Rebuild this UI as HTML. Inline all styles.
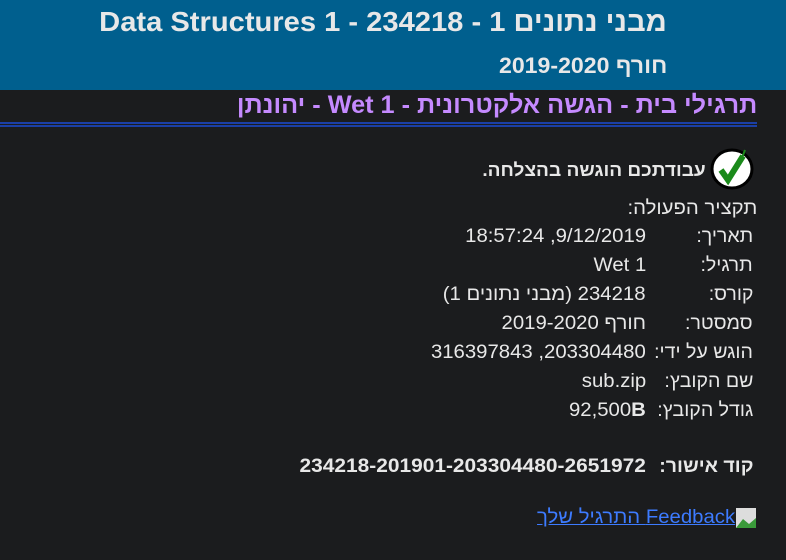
<!DOCTYPE html>
<html><head><meta charset="utf-8"><style>
body{margin:0;width:786px;height:560px;background:#1b1c1e;overflow:hidden;font-family:"Liberation Sans",Arial,sans-serif;color:#e8e8e8;position:relative}
.hdr{position:absolute;left:0;top:0;width:786px;height:90px;background:#005f8e}
.a{position:absolute;white-space:nowrap;direction:rtl;transform-origin:right center}
.r{font-size:19px;line-height:20px;transform:scaleX(1.07)}
.l{right:33px;transform:scaleX(1.03)}.v{right:140px}
</style></head><body>
<div class="hdr"></div>
<div class="a" style="right:119px;top:5px;font-size:28px;font-weight:bold;color:#e8e8e8;line-height:34px;transform:scaleX(1.04)">מבני נתונים 1 - Data Structures 1 - 234218</div>
<div class="a" style="right:119px;top:53px;font-size:22px;font-weight:bold;color:#e8e8e8;line-height:26px;transform:scaleX(1.05)">חורף 2019-2020</div>
<div class="a" style="right:29px;top:91px;font-size:25px;font-weight:bold;color:#c58aff;line-height:28px;transform:scaleX(1.01)">תרגילי בית - הגשה אלקטרונית - Wet 1 - יהונתן</div>
<div style="position:absolute;left:0;top:122px;width:757px;height:2px;background:#1b3fa6"></div>
<div style="position:absolute;left:0;top:125px;width:757px;height:2px;background:#1b3fa6"></div>
<svg style="position:absolute;left:709px;top:144px" width="46" height="46" viewBox="0 0 46 46"><ellipse cx="23" cy="25" rx="20" ry="19" fill="#fff" stroke="#000" stroke-width="3"/><path d="M12 26 L19 36 L34 12" fill="none" stroke="#1a8a1a" stroke-width="6"/><path d="M36 6 L33 14" stroke="#1a8a1a" stroke-width="2"/></svg>
<div class="a" style="right:80px;top:160px;font-size:18px;font-weight:bold;line-height:20px;transform:scaleX(1.06)">עבודתכם הוגשה בהצלחה.</div>
<div class="a r" style="right:29px;top:199px">תקציר הפעולה:</div>
<div class="a r l" style="top:227px">תאריך:</div><div class="a r v" style="top:227px">9/12/2019, 18:57:24</div>
<div class="a r l" style="top:256px">תרגיל:</div><div class="a r v" style="top:256px">Wet 1</div>
<div class="a r l" style="top:285px">קורס:</div><div class="a r v" style="top:285px">234218 (מבני נתונים 1)</div>
<div class="a r l" style="top:314px">סמסטר:</div><div class="a r v" style="top:314px">חורף 2019-2020</div>
<div class="a r l" style="top:343px">הוגש על ידי:</div><div class="a r v" style="top:343px">203304480, 316397843</div>
<div class="a r l" style="top:372px">שם הקובץ:</div><div class="a r v" style="top:372px">sub.zip</div>
<div class="a r l" style="top:401px">גודל הקובץ:</div><div class="a r v" style="top:401px">92,500<b>B</b></div>
<div class="a r l" style="top:457px;font-weight:bold">קוד אישור:</div><div class="a r v" style="top:457px;font-weight:bold;transform:scaleX(1.1)">234218-201901-203304480-2651972</div>
<svg style="position:absolute;left:735px;top:507px" width="23" height="22"><rect x="1" y="1" width="20" height="20" fill="#ddd"/><path d="M1 21 L8 12 L14 17 L21 11 L21 21Z" fill="#3a9a3a"/></svg>
<div class="a" style="right:51px;top:507px;font-size:19px;line-height:22px;color:#3d7bff;text-decoration:underline;transform:scaleX(1.07)">Feedback התרגיל שלך</div>
</body></html>
